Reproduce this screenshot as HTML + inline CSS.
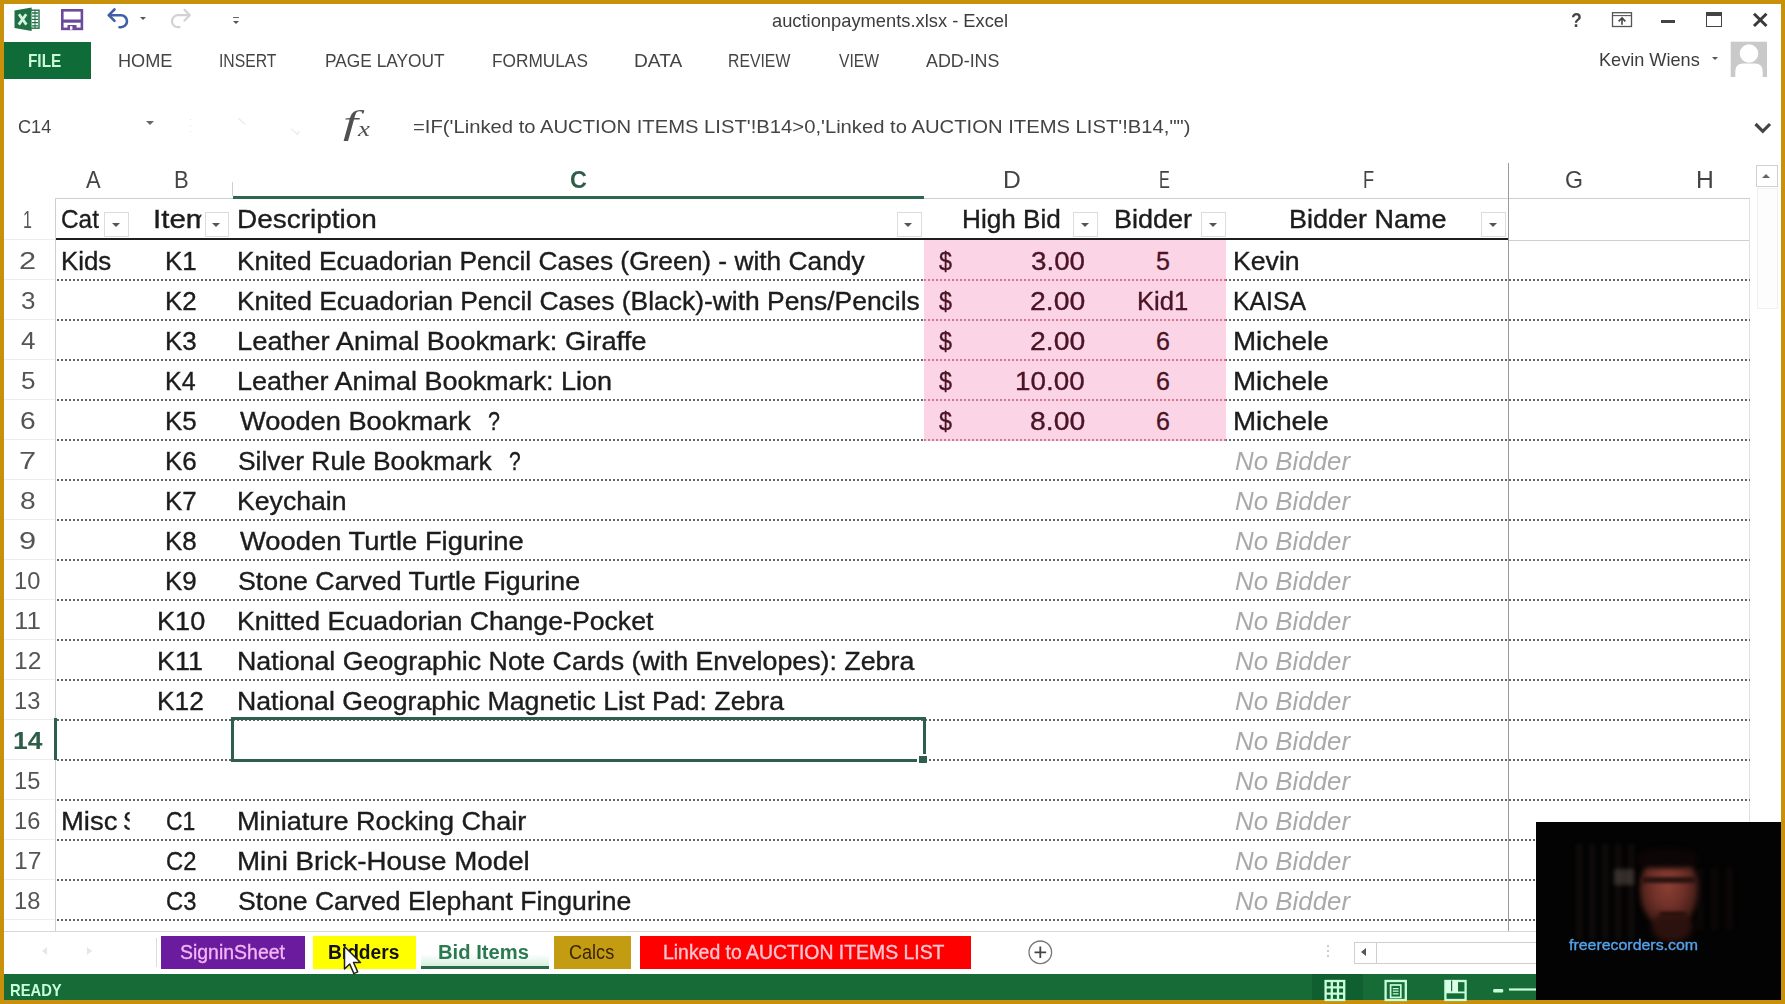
<!DOCTYPE html>
<html><head><meta charset="utf-8"><title>auctionpayments.xlsx - Excel</title>
<style>
html,body{margin:0;padding:0}
body{width:1785px;height:1004px;overflow:hidden;background:#c8900b;position:relative;font-family:"Liberation Sans",sans-serif}
div,span,svg{position:absolute}
.t{white-space:pre;line-height:1;transform-origin:0 0;display:block}
.win{left:4px;top:3.5px;width:1777px;height:996.5px;background:#fff}
.file{left:4px;top:41.5px;width:87px;height:37.5px;background:#0f6b37}
.lg{background:#cfcfcf}
.dot{left:57px;width:1693px;height:2px;background:repeating-linear-gradient(90deg,#666 0,#666 2px,transparent 2px,transparent 4px)}
.pdot{left:923.5px;width:302.5px;height:2px;background:repeating-linear-gradient(90deg,#d9738f 0,#d9738f 2px,#fbd5e6 2px,#fbd5e6 4px)}
.rh{left:4px;width:51px;height:1px;background:#ededed}
.fb{width:24.8px;height:24.4px;background:#fff;border:1px solid #dcdcdc;box-sizing:border-box;top:212.3px}
.fb:after{content:"";position:absolute;left:6.6px;top:9.6px;border-left:4.9px solid transparent;border-right:4.9px solid transparent;border-top:4.9px solid #555}
.tab{top:935.8px;height:32.8px}
</style></head><body>
<div class="win"></div>
<!-- title bar icons -->
<svg style="left:13px;top:6px" width="28" height="27" viewBox="13 6 28 27">
<rect x="29" y="10.2" width="10" height="18" fill="#fff" stroke="#1f7145" stroke-width="1.4"/>
<g stroke="#1f7145" stroke-width="1.3"><path d="M32 13h6M32 16.2h6M32 19.4h6M32 22.6h6M32 25.8h6"/><path d="M35 10.5v17.5" stroke-width="1"/></g>
<path d="M14.5 10.6 31.6 7.4V31L14.5 27.9Z" fill="#1f7145"/>
<path d="M19 14.2 26.4 24.6M26.2 14.2 18.8 24.6" stroke="#d6f5e0" stroke-width="2.7" fill="none"/>
</svg>
<svg style="left:60px;top:8px" width="25" height="24" viewBox="60 8 25 24">
<rect x="62.3" y="10.3" width="19.6" height="18.6" fill="#fff" stroke="#6c4a9c" stroke-width="2.6"/>
<rect x="62" y="19.5" width="20" height="3.2" fill="#6c4a9c"/>
<rect x="67.5" y="25" width="9" height="4.5" fill="#6c4a9c"/><rect x="70" y="26.2" width="2.4" height="3.5" fill="#fff"/>
</svg>
<svg style="left:105px;top:7px" width="26" height="24" viewBox="105 7 26 24">
<path d="M109 15.2 H121 a6 6 0 0 1 0 12 H119.5" fill="none" stroke="#3f5ea8" stroke-width="2.6" stroke-linecap="round"/>
<path d="M114.5 9.5 108.8 15.2 114.5 20.9" fill="none" stroke="#3f5ea8" stroke-width="2.6" stroke-linecap="round" stroke-linejoin="round"/>
</svg>
<div style="left:139.8px;top:16.8px;width:0;height:0;border-left:3px solid transparent;border-right:3px solid transparent;border-top:3.4px solid #555"></div>
<svg style="left:168px;top:7px" width="26" height="24" viewBox="168 7 26 24">
<path d="M189.5 15.2 H178 a6 6 0 0 0 0 12 H179.5" fill="none" stroke="#d2d2d2" stroke-width="2.2" stroke-linecap="round"/>
<path d="M184.5 9.8 189.8 15.2 184.5 20.6" fill="none" stroke="#d2d2d2" stroke-width="2.2" stroke-linecap="round" stroke-linejoin="round"/>
</svg>
<div style="left:232.6px;top:16.6px;width:6px;height:1.6px;background:#666"></div>
<div style="left:232.6px;top:21px;width:0;height:0;border-left:3px solid transparent;border-right:3px solid transparent;border-top:3.6px solid #555"></div>
<svg style="left:1610px;top:10px" width="24" height="19" viewBox="1610 10 24 19">
<rect x="1612.5" y="12.7" width="19" height="13.8" fill="#fff" stroke="#555" stroke-width="1.3"/>
<path d="M1612.5 15.6h19" stroke="#555" stroke-width="1.1"/>
<path d="M1622 24.8v-6.4M1618.6 21.4 1622 18 1625.4 21.4" stroke="#444" stroke-width="1.6" fill="none"/>
</svg>
<div style="left:1660.6px;top:20.3px;width:14px;height:3.2px;background:#444"></div>
<div style="left:1706px;top:12.2px;width:16px;height:14.6px;box-sizing:border-box;border:1.4px solid #444;border-top-width:4px"></div>
<svg style="left:1751px;top:11px" width="18" height="18" viewBox="1751 11 18 18"><path d="M1754 13.8 1766.5 26M1766.5 13.8 1754 26" stroke="#3a3a3a" stroke-width="3" fill="none"/></svg>
<div style="left:1711.5px;top:57px;width:0;height:0;border-left:3.6px solid transparent;border-right:3.6px solid transparent;border-top:3.8px solid #555"></div>
<svg style="left:1730px;top:41px" width="38" height="37" viewBox="1730 41 38 37">
<rect x="1730.7" y="41.7" width="36.3" height="35.3" fill="#c9c9c9"/>
<circle cx="1749" cy="53.5" r="9.3" fill="#fff"/>
<path d="M1735.3 77.5v-6q0-8 8-8h11.4q8 0 8 8v6z" fill="#fff"/>
</svg>
<div style="left:146.2px;top:121.3px;width:0;height:0;border-left:4.2px solid transparent;border-right:4.2px solid transparent;border-top:4.2px solid #666"></div>
<div style="left:189.8px;top:119px;width:1.4px;height:1.4px;background:#e2e2e2"></div>
<div style="left:189.8px;top:125px;width:1.4px;height:1.4px;background:#e2e2e2"></div>
<div style="left:189.8px;top:131px;width:1.4px;height:1.4px;background:#e2e2e2"></div>
<svg style="left:230px;top:110px" width="80" height="30" viewBox="230 110 80 30"><path d="M238.5 118.5 245.5 124.5" stroke="#ececec" stroke-width="1.6" fill="none"/><path d="M291 128.5 297.5 134.5 299 131" stroke="#eeeeee" stroke-width="1.6" fill="none"/></svg>
<svg style="left:1752px;top:120px" width="22" height="16" viewBox="1752 120 22 16"><path d="M1755.5 124 1762.8 131.3 1770 124" stroke="#444" stroke-width="3.2" fill="none"/></svg>
<div class="file"></div>
<!-- grid -->
<div id="grid">
<div style="left:923.5px;top:239.8px;width:302.5px;height:200px;background:#fbd5e6"></div>
<div class="lg" style="left:55.3px;top:198.5px;width:1px;height:732.5px"></div>
<div class="rh" style="top:239px"></div>
<div class="rh" style="top:279px"></div>
<div class="rh" style="top:319px"></div>
<div class="rh" style="top:359px"></div>
<div class="rh" style="top:399px"></div>
<div class="rh" style="top:439px"></div>
<div class="rh" style="top:479px"></div>
<div class="rh" style="top:519px"></div>
<div class="rh" style="top:559px"></div>
<div class="rh" style="top:599px"></div>
<div class="rh" style="top:639px"></div>
<div class="rh" style="top:679px"></div>
<div class="rh" style="top:719px"></div>
<div class="rh" style="top:759px"></div>
<div class="rh" style="top:799px"></div>
<div class="rh" style="top:839px"></div>
<div class="rh" style="top:879px"></div>
<div class="rh" style="top:919px"></div>
<div class="lg" style="left:55.3px;top:198.3px;width:1694.7px;height:1px"></div>
<div class="lg" style="left:1509px;top:239.7px;width:241px;height:1px"></div>
<div style="left:1749.3px;top:198.5px;width:1px;height:732.5px;background:#e0e0e0"></div>
<div class="lg" style="left:4px;top:930.5px;width:1777px;height:1px;background:#d8d8d8"></div>
<div class="dot" style="top:278.8px"></div>
<div class="dot" style="top:318.8px"></div>
<div class="dot" style="top:358.8px"></div>
<div class="dot" style="top:398.8px"></div>
<div class="dot" style="top:438.8px"></div>
<div class="dot" style="top:478.8px"></div>
<div class="dot" style="top:518.8px"></div>
<div class="dot" style="top:558.8px"></div>
<div class="dot" style="top:598.8px"></div>
<div class="dot" style="top:638.8px"></div>
<div class="dot" style="top:678.8px"></div>
<div class="dot" style="top:718.8px"></div>
<div class="dot" style="top:758.8px"></div>
<div class="dot" style="top:798.8px"></div>
<div class="dot" style="top:838.8px"></div>
<div class="dot" style="top:878.8px"></div>
<div class="dot" style="top:918.8px"></div>
<div class="pdot" style="top:278.8px"></div>
<div class="pdot" style="top:318.8px"></div>
<div class="pdot" style="top:358.8px"></div>
<div class="pdot" style="top:398.8px"></div>
<div class="pdot" style="top:438.8px"></div>
<div class="lg" style="left:232.3px;top:182px;width:1px;height:14px"></div>
<div style="left:56px;top:237.6px;width:1452px;height:2.3px;background:#1e1e1e"></div>
<div style="left:1507.8px;top:163px;width:1.5px;height:768px;background:#9a9a9a"></div>
<div style="left:232.5px;top:195.8px;width:691px;height:3.2px;background:#2e6650"></div>
<div class="fb" style="left:104px"></div>
<div class="fb" style="left:204.7px"></div>
<div class="fb" style="left:896.8px"></div>
<div class="fb" style="left:1073.3px"></div>
<div class="fb" style="left:1201px"></div>
<div class="fb" style="left:1481px"></div>
<div style="left:54px;top:718.2px;width:2.5px;height:41.5px;background:#2d5f4c"></div>
<div style="left:230.7px;top:716.9px;width:695px;height:44.8px;box-sizing:border-box;border:3.1px solid #2d5f4c"></div>
<div style="left:916.5px;top:753.5px;width:11px;height:10px;background:#fff"></div>
<div style="left:919.3px;top:755.9px;width:7.5px;height:7.1px;background:#2d5f4c"></div>
<div style="left:1756px;top:165px;width:21.5px;height:21.5px;box-sizing:border-box;border:1px solid #d0d0d0;background:#fff"></div>
<div style="left:1762px;top:173.5px;border-left:4.7px solid transparent;border-right:4.7px solid transparent;border-bottom:4.6px solid #666;width:0;height:0"></div>
<div style="left:1756.5px;top:188px;width:21px;height:121px;box-sizing:border-box;border:1px solid #f0f0f0;background:#fdfdfd"></div>
</div>
<div style="left:42px;top:947px;width:0;height:0;border-top:4.5px solid transparent;border-bottom:4.5px solid transparent;border-right:5px solid #e6e6e6"></div>
<div style="left:87px;top:947px;width:0;height:0;border-top:4.5px solid transparent;border-bottom:4.5px solid transparent;border-left:5px solid #e6e6e6"></div>
<div style="left:156.3px;top:937.5px;width:1px;height:29px;background:#dcdcdc"></div>
<div class="tab" style="left:160.8px;width:144.6px;background:#6a1b9e"></div>
<div class="tab" style="left:313px;width:103.3px;background:#ffff00"></div>
<div class="tab" style="left:420.7px;width:128.7px;background:linear-gradient(#fff 0,#fff 55%,#c9ecd7 100%)"></div>
<div style="left:420.7px;top:965.6px;width:128.7px;height:3px;background:#2d6a4c"></div>
<div class="tab" style="left:554px;width:77.4px;background:#c39c12"></div>
<div class="tab" style="left:640.3px;width:330.5px;background:#fe0000"></div>
<svg style="left:1026px;top:938px" width="29" height="29" viewBox="1026 938 29 29"><circle cx="1040.3" cy="952.3" r="11.3" fill="#fff" stroke="#777" stroke-width="1.3"/><path d="M1034.5 952.3h11.6M1040.3 946.5v11.6" stroke="#444" stroke-width="1.8"/></svg>
<div style="left:1327.3px;top:945px;width:1.6px;height:1.6px;background:#ccc"></div>
<div style="left:1327.3px;top:950px;width:1.6px;height:1.6px;background:#ccc"></div>
<div style="left:1327.3px;top:955px;width:1.6px;height:1.6px;background:#ccc"></div>
<div style="left:1353.7px;top:941.8px;width:183px;height:22.4px;box-sizing:border-box;border:1px solid #cfcfcf;background:#fff"></div>
<div style="left:1376.3px;top:941.8px;width:1px;height:22.4px;background:#cfcfcf"></div>
<div style="left:1361.3px;top:948.4px;width:0;height:0;border-top:4.6px solid transparent;border-bottom:4.6px solid transparent;border-right:5.6px solid #555"></div>
<div style="left:4px;top:974.2px;width:1777px;height:25.8px;background:#176b36"></div>
<div style="left:1312px;top:974.2px;width:50.5px;height:25.8px;background:#0f5f30"></div>
<svg style="left:1322px;top:978px" width="218" height="24" viewBox="1322 978 218 24">
<g fill="none" stroke="#c8ffdb" stroke-width="2.3">
<rect x="1325.6" y="981" width="18.6" height="19"/><path d="M1325.6 987.3h18.6M1325.6 993.6h18.6M1331.8 981v19M1338 981v19"/>
<rect x="1385.6" y="981" width="20.2" height="19"/><rect x="1390.6" y="985" width="10.2" height="12.4" stroke-width="1.7"/><path d="M1392.8 988.6h5.8M1392.8 991.2h5.8M1392.8 993.8h5.8" stroke-width="1.3"/>
<rect x="1445.4" y="981" width="20.2" height="19"/>
</g>
<rect x="1446" y="980.4" width="12" height="12.2" fill="#dcffe8"/><path d="M1451.6 980.4v11" stroke="#176b36" stroke-width="1.2"/><path d="M1446 992.4h19" stroke="#c8ffdb" stroke-width="1.8"/>
<rect x="1493.2" y="989" width="10" height="3.4" rx="1" fill="#c8ffdb"/><rect x="1509" y="988.4" width="28" height="2.2" fill="#c8ffdb"/>
</svg>
<div style="left:1536.3px;top:821.7px;width:244.9px;height:178.3px;background:#040303;overflow:hidden">
<div style="left:40px;top:22px;width:62px;height:96px;background:repeating-linear-gradient(90deg,rgba(60,45,45,.0) 0,rgba(60,45,45,.35) 3px,rgba(20,12,12,0) 7px,rgba(20,12,12,0) 13px);filter:blur(2px)"></div>
<div style="left:78px;top:47px;width:20px;height:16px;background:#5a5048;opacity:.55;filter:blur(2px)"></div>
<div style="left:160px;top:46px;width:40px;height:62px;background:repeating-linear-gradient(90deg,rgba(50,30,30,0) 0,rgba(50,30,30,.3) 3px,rgba(20,12,12,0) 8px,rgba(20,12,12,0) 15px);filter:blur(2px)"></div>
<div style="left:104px;top:32px;width:58px;height:74px;border-radius:45% 45% 50% 50%;background:radial-gradient(ellipse at 48% 40%,#8e4034 0,#6e3028 40%,#3c1a14 75%,#160a08 100%);filter:blur(2.6px)"></div>
<div style="left:116px;top:92px;width:40px;height:28px;border-radius:30% 30% 50% 50%;background:#2c120e;filter:blur(3px)"></div>
<div style="left:100px;top:26px;width:62px;height:20px;border-radius:50% 50% 30% 30%;background:#0c0605;filter:blur(2.4px)"></div>
<div style="left:106px;top:55px;width:54px;height:6.5px;background:#2a1410;filter:blur(1.6px)"></div>
<div style="left:124px;top:90px;width:26px;height:4.5px;background:#2a100c;filter:blur(1.6px)"></div>
</div>
<span class="t" style="left:771.90px;top:12.55px;font-size:17.9px;color:#3c3c3c;transform:scaleX(1.0235)">auctionpayments.xlsx - Excel</span>
<span class="t" style="left:28.18px;top:51.69px;font-size:18.8px;color:#c9f7d9;transform:scaleX(0.8171);font-weight:bold">FILE</span>
<span class="t" style="left:118.03px;top:51.69px;font-size:18.8px;color:#444;transform:scaleX(0.9669)">HOME</span>
<span class="t" style="left:219.16px;top:51.69px;font-size:18.8px;color:#444;transform:scaleX(0.8375)">INSERT</span>
<span class="t" style="left:324.58px;top:51.69px;font-size:18.8px;color:#444;transform:scaleX(0.9220)">PAGE LAYOUT</span>
<span class="t" style="left:492.08px;top:51.69px;font-size:18.8px;color:#444;transform:scaleX(0.9190)">FORMULAS</span>
<span class="t" style="left:633.58px;top:51.69px;font-size:18.8px;color:#444;transform:scaleX(1.0198)">DATA</span>
<span class="t" style="left:728.26px;top:51.69px;font-size:18.8px;color:#444;transform:scaleX(0.8410)">REVIEW</span>
<span class="t" style="left:838.50px;top:51.69px;font-size:18.8px;color:#444;transform:scaleX(0.8349)">VIEW</span>
<span class="t" style="left:926.30px;top:51.69px;font-size:18.8px;color:#444;transform:scaleX(0.9506)">ADD-INS</span>
<span class="t" style="left:1599.05px;top:49.82px;font-size:19px;color:#3c3c3c;transform:scaleX(0.9539)">Kevin Wiens</span>
<span class="t" style="left:1571.00px;top:9.97px;font-size:20px;color:#444;transform:scaleX(0.8833);font-weight:bold">?</span>
<span class="t" style="left:18.40px;top:117.97px;font-size:18.7px;color:#444;transform:scaleX(0.9708)">C14</span>
<span class="t" style="left:342.60px;top:106.96px;font-size:33px;color:#505050;transform:scaleX(1.6462);font-style:italic;font-family:'Liberation Serif', serif">f</span>
<span class="t" style="left:358.34px;top:118.55px;font-size:20px;color:#505050;transform:scaleX(1.3400);font-style:italic;font-family:'Liberation Serif', serif">x</span>
<span class="t" style="left:413.00px;top:117.59px;font-size:18.2px;color:#444;transform:scaleX(1.1124)">=IF('Linked to AUCTION ITEMS LIST'!B14&gt;0,'Linked to AUCTION ITEMS LIST'!B14,"")</span>
<span class="t" style="left:86.00px;top:167.63px;font-size:24.3px;color:#444;transform:scaleX(0.9000)">A</span>
<span class="t" style="left:173.78px;top:167.63px;font-size:24.3px;color:#444;transform:scaleX(0.9077)">B</span>
<span class="t" style="left:1002.97px;top:167.63px;font-size:24.3px;color:#444;transform:scaleX(1.0133)">D</span>
<span class="t" style="left:1158.66px;top:167.63px;font-size:24.3px;color:#444;transform:scaleX(0.6714)">E</span>
<span class="t" style="left:1362.70px;top:167.63px;font-size:24.3px;color:#444;transform:scaleX(0.7500)">F</span>
<span class="t" style="left:1564.65px;top:167.63px;font-size:24.3px;color:#444;transform:scaleX(0.9529)">G</span>
<span class="t" style="left:1695.77px;top:167.63px;font-size:24.3px;color:#444;transform:scaleX(1.0143)">H</span>
<span class="t" style="left:569.64px;top:167.63px;font-size:24.3px;color:#2f5e48;transform:scaleX(0.9625);font-weight:bold">C</span>
<span class="t" style="left:22.82px;top:209.01px;font-size:23.5px;color:#555;transform:scaleX(0.6818)">1</span>
<span class="t" style="left:19.49px;top:250.31px;font-size:23.5px;color:#555;transform:scaleX(1.3091)">2</span>
<span class="t" style="left:20.80px;top:290.31px;font-size:23.5px;color:#555;transform:scaleX(1.1077)">3</span>
<span class="t" style="left:20.80px;top:330.31px;font-size:23.5px;color:#555;transform:scaleX(1.1077)">4</span>
<span class="t" style="left:20.80px;top:370.31px;font-size:23.5px;color:#555;transform:scaleX(1.1077)">5</span>
<span class="t" style="left:19.60px;top:410.31px;font-size:23.5px;color:#555;transform:scaleX(1.2000)">6</span>
<span class="t" style="left:19.49px;top:450.31px;font-size:23.5px;color:#555;transform:scaleX(1.3091)">7</span>
<span class="t" style="left:19.60px;top:490.31px;font-size:23.5px;color:#555;transform:scaleX(1.2000)">8</span>
<span class="t" style="left:19.49px;top:530.31px;font-size:23.5px;color:#555;transform:scaleX(1.3091)">9</span>
<span class="t" style="left:13.79px;top:570.31px;font-size:23.5px;color:#555;transform:scaleX(1.0052)">10</span>
<span class="t" style="left:13.70px;top:610.31px;font-size:23.5px;color:#555;transform:scaleX(1.1019)">11</span>
<span class="t" style="left:13.75px;top:650.31px;font-size:23.5px;color:#555;transform:scaleX(1.0470)">12</span>
<span class="t" style="left:13.79px;top:690.31px;font-size:23.5px;color:#555;transform:scaleX(1.0052)">13</span>
<span class="t" style="left:13.79px;top:770.31px;font-size:23.5px;color:#555;transform:scaleX(1.0052)">15</span>
<span class="t" style="left:13.79px;top:810.31px;font-size:23.5px;color:#555;transform:scaleX(1.0052)">16</span>
<span class="t" style="left:13.75px;top:850.31px;font-size:23.5px;color:#555;transform:scaleX(1.0470)">17</span>
<span class="t" style="left:13.79px;top:890.31px;font-size:23.5px;color:#555;transform:scaleX(1.0052)">18</span>
<span class="t" style="left:12.68px;top:730.01px;font-size:23.5px;color:#2f5e48;transform:scaleX(1.1249);font-weight:bold">14</span>
<span class="t" style="left:61.23px;top:207.14px;font-size:25px;color:#1c1c1c;transform:scaleX(0.9748);-webkit-text-stroke:0.35px #1c1c1c">Cat</span>
<span class="t" style="left:153.14px;top:207.14px;font-size:25px;color:#1c1c1c;transform:scaleX(1.1792);-webkit-text-stroke:0.35px #1c1c1c;width:41.30px;overflow:hidden">Item</span>
<span class="t" style="left:237.26px;top:207.14px;font-size:25px;color:#1c1c1c;transform:scaleX(1.1175);-webkit-text-stroke:0.35px #1c1c1c">Description</span>
<span class="t" style="left:961.61px;top:207.14px;font-size:25px;color:#1c1c1c;transform:scaleX(1.0460);-webkit-text-stroke:0.35px #1c1c1c">High Bid</span>
<span class="t" style="left:1113.84px;top:207.14px;font-size:25px;color:#1c1c1c;transform:scaleX(1.0809);-webkit-text-stroke:0.35px #1c1c1c">Bidder</span>
<span class="t" style="left:1288.74px;top:207.14px;font-size:25px;color:#1c1c1c;transform:scaleX(1.0791);-webkit-text-stroke:0.35px #1c1c1c">Bidder Name</span>
<span class="t" style="left:60.73px;top:248.74px;font-size:25px;color:#1c1c1c;transform:scaleX(1.0340);-webkit-text-stroke:0.35px #1c1c1c">Kids</span>
<span class="t" style="left:60.91px;top:808.74px;font-size:25px;color:#1c1c1c;transform:scaleX(1.0966);-webkit-text-stroke:0.35px #1c1c1c">Misc</span>
<span class="t" style="left:123.35px;top:808.74px;font-size:25px;color:#1c1c1c;transform:scaleX(0.9467);-webkit-text-stroke:0.35px #1c1c1c;width:6.87px;overflow:hidden">S</span>
<span class="t" style="left:164.73px;top:248.74px;font-size:25px;color:#1c1c1c;transform:scaleX(1.0370);-webkit-text-stroke:0.35px #1c1c1c">K1</span>
<span class="t" style="left:164.73px;top:288.74px;font-size:25px;color:#1c1c1c;transform:scaleX(1.0370);-webkit-text-stroke:0.35px #1c1c1c">K2</span>
<span class="t" style="left:164.73px;top:328.74px;font-size:25px;color:#1c1c1c;transform:scaleX(1.0370);-webkit-text-stroke:0.35px #1c1c1c">K3</span>
<span class="t" style="left:164.80px;top:368.74px;font-size:25px;color:#1c1c1c;transform:scaleX(1.0009);-webkit-text-stroke:0.35px #1c1c1c">K4</span>
<span class="t" style="left:164.73px;top:408.74px;font-size:25px;color:#1c1c1c;transform:scaleX(1.0370);-webkit-text-stroke:0.35px #1c1c1c">K5</span>
<span class="t" style="left:164.73px;top:448.74px;font-size:25px;color:#1c1c1c;transform:scaleX(1.0370);-webkit-text-stroke:0.35px #1c1c1c">K6</span>
<span class="t" style="left:164.73px;top:488.74px;font-size:25px;color:#1c1c1c;transform:scaleX(1.0370);-webkit-text-stroke:0.35px #1c1c1c">K7</span>
<span class="t" style="left:164.73px;top:528.74px;font-size:25px;color:#1c1c1c;transform:scaleX(1.0370);-webkit-text-stroke:0.35px #1c1c1c">K8</span>
<span class="t" style="left:164.73px;top:568.74px;font-size:25px;color:#1c1c1c;transform:scaleX(1.0370);-webkit-text-stroke:0.35px #1c1c1c">K9</span>
<span class="t" style="left:157.23px;top:608.74px;font-size:25px;color:#1c1c1c;transform:scaleX(1.0847);-webkit-text-stroke:0.35px #1c1c1c">K10</span>
<span class="t" style="left:157.25px;top:648.74px;font-size:25px;color:#1c1c1c;transform:scaleX(1.0775);-webkit-text-stroke:0.35px #1c1c1c">K11</span>
<span class="t" style="left:157.29px;top:688.74px;font-size:25px;color:#1c1c1c;transform:scaleX(1.0534);-webkit-text-stroke:0.35px #1c1c1c">K12</span>
<span class="t" style="left:166.08px;top:808.74px;font-size:25px;color:#1c1c1c;transform:scaleX(0.9183);-webkit-text-stroke:0.35px #1c1c1c">C1</span>
<span class="t" style="left:166.05px;top:848.74px;font-size:25px;color:#1c1c1c;transform:scaleX(0.9516);-webkit-text-stroke:0.35px #1c1c1c">C2</span>
<span class="t" style="left:166.05px;top:888.74px;font-size:25px;color:#1c1c1c;transform:scaleX(0.9516);-webkit-text-stroke:0.35px #1c1c1c">C3</span>
<span class="t" style="left:237.39px;top:248.74px;font-size:25px;color:#1c1c1c;transform:scaleX(1.0529);-webkit-text-stroke:0.35px #1c1c1c">Knited Ecuadorian Pencil Cases (Green) - with Candy</span>
<span class="t" style="left:237.39px;top:288.74px;font-size:25px;color:#1c1c1c;transform:scaleX(1.0567);-webkit-text-stroke:0.35px #1c1c1c">Knited Ecuadorian Pencil Cases (Black)-with Pens/Pencils</span>
<span class="t" style="left:237.31px;top:328.74px;font-size:25px;color:#1c1c1c;transform:scaleX(1.0927);-webkit-text-stroke:0.35px #1c1c1c">Leather Animal Bookmark: Giraffe</span>
<span class="t" style="left:237.34px;top:368.74px;font-size:25px;color:#1c1c1c;transform:scaleX(1.0798);-webkit-text-stroke:0.35px #1c1c1c">Leather Animal Bookmark: Lion</span>
<span class="t" style="left:239.50px;top:408.74px;font-size:25px;color:#1c1c1c;transform:scaleX(1.0887);-webkit-text-stroke:0.35px #1c1c1c">Wooden Bookmark</span>
<span class="t" style="left:237.64px;top:448.74px;font-size:25px;color:#1c1c1c;transform:scaleX(1.0560);-webkit-text-stroke:0.35px #1c1c1c">Silver Rule Bookmark</span>
<span class="t" style="left:237.37px;top:488.74px;font-size:25px;color:#1c1c1c;transform:scaleX(1.0656);-webkit-text-stroke:0.35px #1c1c1c">Keychain</span>
<span class="t" style="left:239.50px;top:528.74px;font-size:25px;color:#1c1c1c;transform:scaleX(1.0937);-webkit-text-stroke:0.35px #1c1c1c">Wooden Turtle Figurine</span>
<span class="t" style="left:237.63px;top:568.74px;font-size:25px;color:#1c1c1c;transform:scaleX(1.0702);-webkit-text-stroke:0.35px #1c1c1c">Stone Carved Turtle Figurine</span>
<span class="t" style="left:237.37px;top:608.74px;font-size:25px;color:#1c1c1c;transform:scaleX(1.0662);-webkit-text-stroke:0.35px #1c1c1c">Knitted Ecuadorian Change-Pocket</span>
<span class="t" style="left:237.36px;top:648.74px;font-size:25px;color:#1c1c1c;transform:scaleX(1.0713);-webkit-text-stroke:0.35px #1c1c1c">National Geographic Note Cards (with Envelopes): Zebra</span>
<span class="t" style="left:237.37px;top:688.74px;font-size:25px;color:#1c1c1c;transform:scaleX(1.0668);-webkit-text-stroke:0.35px #1c1c1c">National Geographic Magnetic List Pad: Zebra</span>
<span class="t" style="left:236.63px;top:808.74px;font-size:25px;color:#1c1c1c;transform:scaleX(1.0845);-webkit-text-stroke:0.35px #1c1c1c">Miniature Rocking Chair</span>
<span class="t" style="left:236.58px;top:848.74px;font-size:25px;color:#1c1c1c;transform:scaleX(1.1090);-webkit-text-stroke:0.35px #1c1c1c">Mini Brick-House Model</span>
<span class="t" style="left:237.74px;top:888.74px;font-size:25px;color:#1c1c1c;transform:scaleX(1.0637);-webkit-text-stroke:0.35px #1c1c1c">Stone Carved Elephant Fingurine</span>
<span class="t" style="left:488.14px;top:408.74px;font-size:25px;color:#1c1c1c;transform:scaleX(0.8583);-webkit-text-stroke:0.35px #1c1c1c">?</span>
<span class="t" style="left:508.56px;top:448.74px;font-size:25px;color:#1c1c1c;transform:scaleX(0.8417);-webkit-text-stroke:0.35px #1c1c1c">?</span>
<span class="t" style="left:939.30px;top:248.74px;font-size:25px;color:#4a1424;transform:scaleX(0.9357);-webkit-text-stroke:0.35px #4a1424">$</span>
<span class="t" style="left:1031.00px;top:248.74px;font-size:25px;color:#4a1424;transform:scaleX(1.1099);-webkit-text-stroke:0.35px #4a1424">3.00</span>
<span class="t" style="left:1156.00px;top:248.74px;font-size:25px;color:#4a1424;transform:scaleX(1.0000);-webkit-text-stroke:0.35px #4a1424">5</span>
<span class="t" style="left:939.30px;top:288.74px;font-size:25px;color:#4a1424;transform:scaleX(0.9357);-webkit-text-stroke:0.35px #4a1424">$</span>
<span class="t" style="left:1029.87px;top:288.74px;font-size:25px;color:#4a1424;transform:scaleX(1.1336);-webkit-text-stroke:0.35px #4a1424">2.00</span>
<span class="t" style="left:1136.95px;top:288.74px;font-size:25px;color:#4a1424;transform:scaleX(1.0269);-webkit-text-stroke:0.35px #4a1424">Kid1</span>
<span class="t" style="left:939.30px;top:328.74px;font-size:25px;color:#4a1424;transform:scaleX(0.9357);-webkit-text-stroke:0.35px #4a1424">$</span>
<span class="t" style="left:1029.87px;top:328.74px;font-size:25px;color:#4a1424;transform:scaleX(1.1336);-webkit-text-stroke:0.35px #4a1424">2.00</span>
<span class="t" style="left:1156.00px;top:328.74px;font-size:25px;color:#4a1424;transform:scaleX(1.0000);-webkit-text-stroke:0.35px #4a1424">6</span>
<span class="t" style="left:939.30px;top:368.74px;font-size:25px;color:#4a1424;transform:scaleX(0.9357);-webkit-text-stroke:0.35px #4a1424">$</span>
<span class="t" style="left:1015.39px;top:368.74px;font-size:25px;color:#4a1424;transform:scaleX(1.1128);-webkit-text-stroke:0.35px #4a1424">10.00</span>
<span class="t" style="left:1156.00px;top:368.74px;font-size:25px;color:#4a1424;transform:scaleX(1.0000);-webkit-text-stroke:0.35px #4a1424">6</span>
<span class="t" style="left:939.30px;top:408.74px;font-size:25px;color:#4a1424;transform:scaleX(0.9357);-webkit-text-stroke:0.35px #4a1424">$</span>
<span class="t" style="left:1029.87px;top:408.74px;font-size:25px;color:#4a1424;transform:scaleX(1.1336);-webkit-text-stroke:0.35px #4a1424">8.00</span>
<span class="t" style="left:1156.00px;top:408.74px;font-size:25px;color:#4a1424;transform:scaleX(1.0000);-webkit-text-stroke:0.35px #4a1424">6</span>
<span class="t" style="left:1232.67px;top:248.74px;font-size:25px;color:#1c1c1c;transform:scaleX(1.0665);-webkit-text-stroke:0.35px #1c1c1c">Kevin</span>
<span class="t" style="left:1232.82px;top:288.74px;font-size:25px;color:#1c1c1c;transform:scaleX(0.9921);-webkit-text-stroke:0.35px #1c1c1c">KAISA</span>
<span class="t" style="left:1232.58px;top:328.74px;font-size:25px;color:#1c1c1c;transform:scaleX(1.1100);-webkit-text-stroke:0.35px #1c1c1c">Michele</span>
<span class="t" style="left:1232.58px;top:368.74px;font-size:25px;color:#1c1c1c;transform:scaleX(1.1100);-webkit-text-stroke:0.35px #1c1c1c">Michele</span>
<span class="t" style="left:1232.58px;top:408.74px;font-size:25px;color:#1c1c1c;transform:scaleX(1.1100);-webkit-text-stroke:0.35px #1c1c1c">Michele</span>
<span class="t" style="left:1234.80px;top:448.74px;font-size:25px;color:#a9a9a9;transform:scaleX(1.0351);font-style:italic">No Bidder</span>
<span class="t" style="left:1234.80px;top:488.74px;font-size:25px;color:#a9a9a9;transform:scaleX(1.0351);font-style:italic">No Bidder</span>
<span class="t" style="left:1234.80px;top:528.74px;font-size:25px;color:#a9a9a9;transform:scaleX(1.0351);font-style:italic">No Bidder</span>
<span class="t" style="left:1234.80px;top:568.74px;font-size:25px;color:#a9a9a9;transform:scaleX(1.0351);font-style:italic">No Bidder</span>
<span class="t" style="left:1234.80px;top:608.74px;font-size:25px;color:#a9a9a9;transform:scaleX(1.0351);font-style:italic">No Bidder</span>
<span class="t" style="left:1234.80px;top:648.74px;font-size:25px;color:#a9a9a9;transform:scaleX(1.0351);font-style:italic">No Bidder</span>
<span class="t" style="left:1234.80px;top:688.74px;font-size:25px;color:#a9a9a9;transform:scaleX(1.0351);font-style:italic">No Bidder</span>
<span class="t" style="left:1234.80px;top:728.74px;font-size:25px;color:#a9a9a9;transform:scaleX(1.0351);font-style:italic">No Bidder</span>
<span class="t" style="left:1234.80px;top:768.74px;font-size:25px;color:#a9a9a9;transform:scaleX(1.0351);font-style:italic">No Bidder</span>
<span class="t" style="left:1234.80px;top:808.74px;font-size:25px;color:#a9a9a9;transform:scaleX(1.0351);font-style:italic">No Bidder</span>
<span class="t" style="left:1234.80px;top:848.74px;font-size:25px;color:#a9a9a9;transform:scaleX(1.0351);font-style:italic">No Bidder</span>
<span class="t" style="left:1234.80px;top:888.74px;font-size:25px;color:#a9a9a9;transform:scaleX(1.0351);font-style:italic">No Bidder</span>
<span class="t" style="left:179.70px;top:942.99px;font-size:19.5px;color:#f3b6f3;transform:scaleX(0.9977);-webkit-text-stroke:0.35px #f3b6f3">SigninSheet</span>
<span class="t" style="left:328.02px;top:942.99px;font-size:19.5px;color:#111;transform:scaleX(0.9825);font-weight:bold">Bidders</span>
<span class="t" style="left:437.96px;top:942.99px;font-size:19.5px;color:#2a7a50;transform:scaleX(1.0354);font-weight:bold">Bid Items</span>
<span class="t" style="left:568.60px;top:942.99px;font-size:19.5px;color:#3a2508;transform:scaleX(0.9264)">Calcs</span>
<span class="t" style="left:662.90px;top:942.99px;font-size:19.5px;color:#ffc4d0;transform:scaleX(0.9951);-webkit-text-stroke:0.35px #ffc4d0">Linked to AUCTION ITEMS LIST</span>
<span class="t" style="left:9.61px;top:982.55px;font-size:16.6px;color:#c8ffdb;transform:scaleX(0.8892);font-weight:bold">READY</span>
<span class="t" style="left:1568.60px;top:938.14px;font-size:14.6px;color:#55a2ea;transform:scaleX(1.0900);-webkit-text-stroke:0.35px #55a2ea">freerecorders.com</span>
<svg style="left:342px;top:944.3px" width="20" height="34" viewBox="0 0 20 34"><path d="M2.5 2.5v22.5l5.2-5 4.2 9.6 3.8-1.7-4.2-9.4h7z" fill="#fff" stroke="#222" stroke-width="1.5" stroke-linejoin="round"/></svg>
</body></html>
